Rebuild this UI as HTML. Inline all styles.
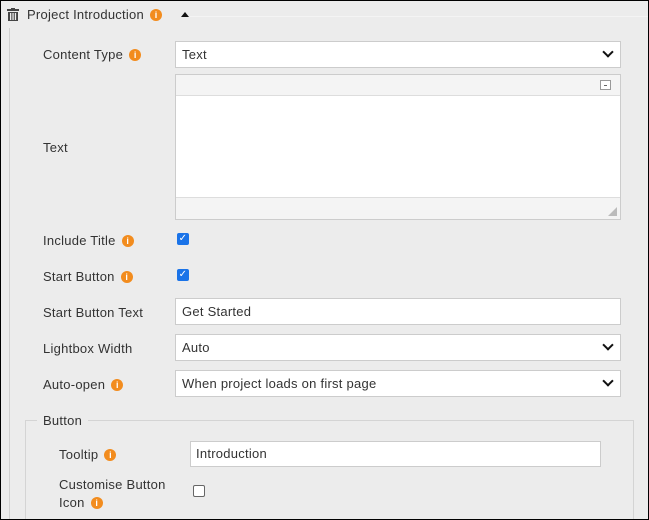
<!DOCTYPE html><html><head><style>
*{box-sizing:border-box}html{overflow:hidden;height:520px}body{margin:0;width:649px;height:520px;background:#ececec;font:13px "Liberation Sans",sans-serif;letter-spacing:0.25px;color:#333;position:relative;overflow:hidden}
.a{position:absolute}
.w{position:absolute;left:0;top:1px;width:649px;height:519px;overflow:hidden}
.i{display:inline-block;width:12px;height:12px;border-radius:50%;background:#f28c1e;color:#fff;font:bold 9px "Liberation Sans";text-align:center;line-height:12px;vertical-align:1px;margin-left:6px;letter-spacing:0}
.in{position:absolute;background:#fff;border:1px solid #ccc;height:27px;line-height:25px;padding-left:6px}
.ch{position:absolute;right:8px;width:8px;height:8px;border-right:2.5px solid #111;border-bottom:2.5px solid #111;transform:rotate(45deg);top:6px}
.cb{position:absolute;width:12px;height:12px;border-radius:2px;background:#1a73e8;color:#fff;font-size:10px;line-height:12px;text-align:center}
</style></head><body>
<div class="w">
<div class="a" style="left:9px;top:27px;width:1px;height:492px;background:#d0d0d0"></div>
<div class="a" style="left:190px;top:15px;width:458px;height:1px;background:#f4f4f4"></div>
<svg class="a" style="left:7px;top:7px" width="12" height="13" viewBox="0 0 12 13"><rect x="0" y="1" width="12" height="2" fill="#444"/><rect x="4" y="0" width="4" height="2" fill="#444"/><rect x="1" y="4" width="10" height="9" fill="#444"/><rect x="3" y="5" width="1.3" height="7" fill="#eee"/><rect x="5.4" y="5" width="1.3" height="7" fill="#eee"/><rect x="7.8" y="5" width="1.3" height="7" fill="#eee"/></svg>
<div class="a" style="left:27px;top:6px">Project Introduction<span class="i">i</span></div>
<div class="a" style="left:181px;top:11px;width:0;height:0;border-left:4px solid transparent;border-right:4px solid transparent;border-bottom:5px solid #111"></div>
<div class="a" style="left:43px;top:46px">Content Type<span class="i">i</span></div>
<div class="in" style="left:175px;top:40px;width:446px">Text<div class="ch"></div></div>
<div class="a" style="left:175px;top:73px;width:446px;height:146px;border:1px solid #ccc;background:#fff"></div>
<div class="a" style="left:176px;top:74px;width:444px;height:21px;background:#f4f4f4;border-bottom:1px solid #ddd"></div>
<div class="a" style="left:600px;top:79px;width:11px;height:10px;border:1px solid #999;background:#fff"><div class="a" style="left:3px;top:4px;width:3px;height:1px;background:#666"></div></div>
<div class="a" style="left:176px;top:196px;width:444px;height:22px;background:#f4f4f4;border-top:1px solid #ddd"></div>
<div class="a" style="left:608px;top:206px;width:0;height:0;border-left:9px solid transparent;border-bottom:9px solid #bbb"></div>
<div class="a" style="left:43px;top:139px">Text</div>
<div class="a" style="left:43px;top:232px">Include Title<span class="i">i</span></div>
<div class="cb" style="left:177px;top:232px">✓</div>
<div class="a" style="left:43px;top:268px">Start Button<span class="i">i</span></div>
<div class="cb" style="left:177px;top:268px">✓</div>
<div class="a" style="left:43px;top:304px">Start Button Text</div>
<div class="in" style="left:175px;top:297px;width:446px">Get Started</div>
<div class="a" style="left:43px;top:340px">Lightbox Width</div>
<div class="in" style="left:175px;top:333px;width:446px">Auto<div class="ch"></div></div>
<div class="a" style="left:43px;top:376px">Auto-open<span class="i">i</span></div>
<div class="in" style="left:175px;top:369px;width:446px">When project loads on first page<div class="ch"></div></div>
<div class="a" style="left:25px;top:419px;width:609px;height:110px;border:1px solid #d4d4d4;border-bottom:none"></div>
<div class="a" style="left:37px;top:412px;background:#ececec;padding:0 6px">Button</div>
<div class="a" style="left:59px;top:446px">Tooltip<span class="i">i</span></div>
<div class="in" style="left:190px;top:440px;width:411px;height:26px;line-height:24px;padding-left:5px">Introduction</div>
<div class="a" style="left:59px;top:475px;line-height:18px">Customise Button<br>Icon<span class="i">i</span></div>
<div class="a" style="left:193px;top:484px;width:12px;height:12px;border:1px solid #666;border-radius:2px;background:#fff"></div>
</div>
<div class="a" style="left:0;top:0;width:649px;height:520px;border:1px solid #000;z-index:5"></div>
</body></html>
